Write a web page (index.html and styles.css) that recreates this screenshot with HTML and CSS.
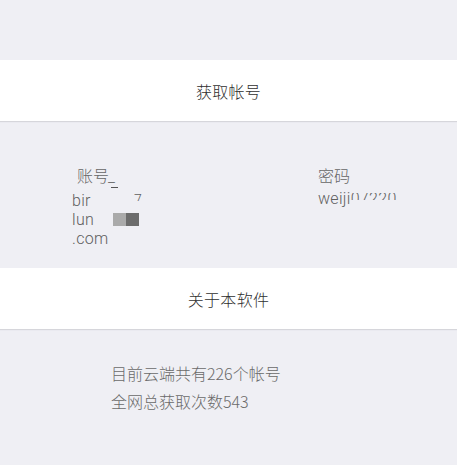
FILE: index.html
```html
<!DOCTYPE html>
<html lang="zh-CN">
<head>
<meta charset="utf-8">
<title>获取帐号</title>
<link rel="stylesheet" href="styles.css">
</head>
<body>
<div class="page">
  <div class="band"><span class="band-text">获取帐号</span></div>
  <div class="creds">
    <div class="col col-account">
      <div class="label">账号<span class="frag-under">_</span><span class="frag-dash"></span></div>
      <div class="value">
        <div class="line">bir<span class="frag-seven">7</span></div>
        <div class="line">lun<span class="blocks"><span class="blk blk-light"></span><span class="blk blk-dark"></span></span></div>
        <div class="line">.com</div>
      </div>
    </div>
    <div class="col col-password">
      <div class="label">密码</div>
      <div class="value"><div class="line">weiji<span class="clipped"><span class="clipped-text">07220</span></span></div></div>
    </div>
  </div>
  <div class="band"><span class="band-text">关于本软件</span></div>
  <div class="stats">
    <p>目前云端共有226个帐号</p>
    <p>全网总获取次数543</p>
  </div>
</div>
</body>
</html>
```

FILE: styles.css
```css
html, body {
  margin: 0;
  padding: 0;
  background: #efeff4;
}
body {
  font-family: "Roboto", "Noto Sans CJK SC", sans-serif;
  font-size: 16px;
  color: #333;
}
.page {
  padding-top: 60px;
}
.band {
  height: 61px;
  background: #fff;
  box-shadow: 0 1px 1px #d6d6db;
  margin-bottom: 1px;
  display: flex;
  align-items: center;
  justify-content: center;
}
.band-text {
  font-family: "Noto Sans CJK SC", sans-serif;
  font-weight: 300;
  font-size: 16px;
  color: #2f2f2f;
  letter-spacing: 0.3px;
}
.creds {
  display: flex;
  height: 146px;
  padding-top: 44px;
  box-sizing: border-box;
  color: #666;
}
.col-account {
  margin-left: 72px;
  width: 246px;
}
.label {
  font-family: "Noto Sans CJK SC", sans-serif;
  font-weight: 300;
  font-size: 16px;
  line-height: 19px;
  margin-bottom: 5px;
  position: relative;
}
.col-account .label {
  padding-left: 5px;
}
.col-password .label {
  margin-bottom: 4px;
}
.frag-under {
  font-family: "Roboto", sans-serif;
  font-weight: 300;
  margin-left: -1px;
}
.frag-dash {
  position: absolute;
  left: 39px;
  top: 21px;
  width: 7px;
  height: 1px;
  background: #555;
}
.value {
  font-family: "Roboto", sans-serif;
  font-weight: 300;
  font-size: 16px;
  line-height: 19px;
  letter-spacing: 0.3px;
  color: #606060;
}
.line {
  position: relative;
  height: 19px;
}
.frag-seven {
  position: absolute;
  left: 62px;
  top: 0;
  height: 10px;
  overflow: hidden;
  font-size: 14px;
}
.blocks {
  display: inline-flex;
  margin-left: 19px;
  vertical-align: -1px;
}
.blk {
  display: inline-block;
  width: 13px;
  height: 13px;
}
.blk-light { background: #aaa; }
.blk-dark { background: #6c6c6c; }
.clipped {
  display: inline-block;
  height: 7px;
  overflow: hidden;
  vertical-align: top;
  margin-top: 4px;
}
.clipped-text {
  display: block;
  margin-top: -4px;
}
.stats {
  padding: 29px 0 0 111px;
  color: #6a6a6a;
  font-family: "Noto Sans CJK SC", sans-serif;
  font-weight: 300;
  font-size: 16px;
}
.stats p {
  margin: 0;
  line-height: 28px;
}
```
